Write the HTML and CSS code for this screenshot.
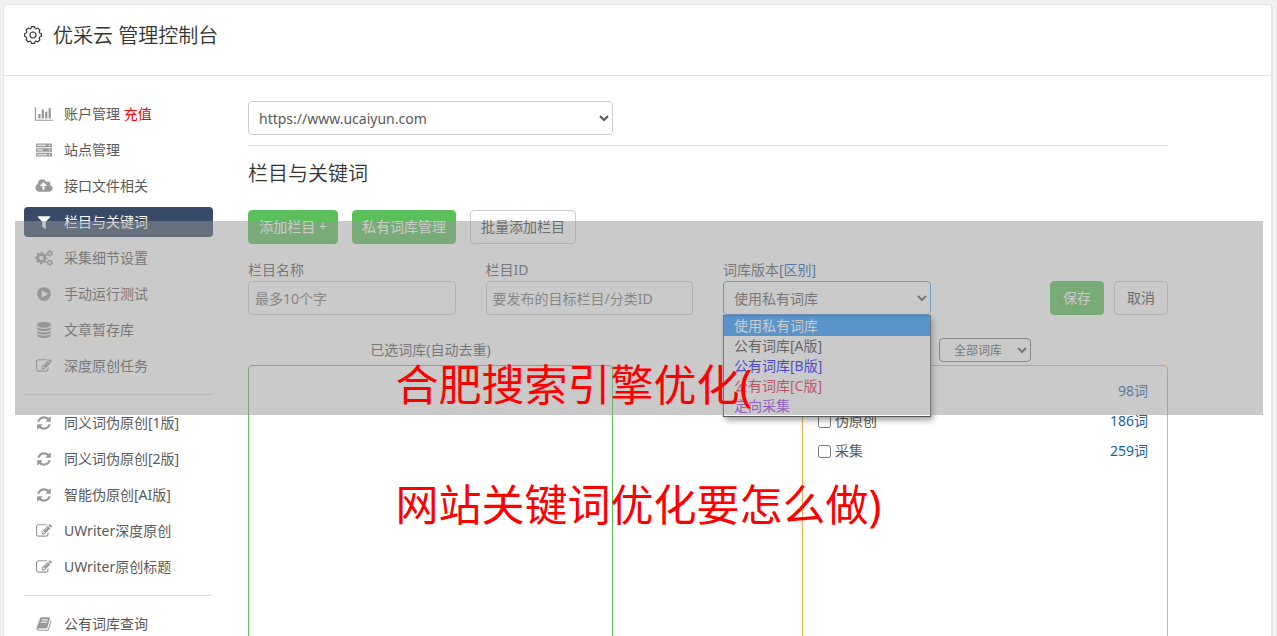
FILE: index.html
```html
<!DOCTYPE html>
<html lang="zh-CN">
<head>
<meta charset="utf-8">
<title>优采云 管理控制台</title>
<link rel="stylesheet" href="styles.css">
</head>
<body>
<svg class="sprite" aria-hidden="true">
  <symbol id="i-chart" viewBox="0 0 2048 1792"><path d="M640 896v512h-256v-512h256zm384-512v1024h-256v-1024h256zm1024 1152v128h-2048v-1536h128v1408h1920zm-640-896v768h-256v-768h256zm384-384v1152h-256v-1152h256z"/></symbol>
  <symbol id="i-server" viewBox="0 0 1792 1792"><path fill-rule="evenodd" d="M0 192q0-32 32-32h1728q32 0 32 32v352q0 32-32 32h-1728q-32 0-32-32zM128 320v96h960v-96zM1440 368a80 80 0 1 0 160 0a80 80 0 1 0-160 0zM0 720q0-32 32-32h1728q32 0 32 32v352q0 32-32 32h-1728q-32 0-32-32zM128 848v96h640v-96zM1440 896a80 80 0 1 0 160 0a80 80 0 1 0-160 0zM0 1248q0-32 32-32h1728q32 0 32 32v352q0 32-32 32h-1728q-32 0-32-32zM128 1376v96h1100v-96zM1440 1424a80 80 0 1 0 160 0a80 80 0 1 0-160 0z"/></symbol>
  <symbol id="i-cloud" viewBox="0 0 1920 1792"><path d="M1280 864q0-14-9-23l-352-352q-9-9-23-9t-23 9l-351 351q-10 12-10 24 0 14 9 23t23 9h224v352q0 13 9.500 22.500t22.500 9.500h192q13 0 22.500-9.500t9.500-22.500v-352h224q13 0 22.500-9.500t9.500-22.500zm640 288q0 159-112.500 271.500t-271.500 112.500h-1088q-185 0-316.500-131.500t-131.500-316.500q0-130 70-240t188-165q-2-30-2-43 0-212 150-362t362-150q156 0 285.500 87t188.500 231q71-62 166-62 106 0 181 75t75 181q0 76-41 138 130 31 213.500 135.500t83.500 238.500z"/></symbol>
  <symbol id="i-filter" viewBox="0 0 1792 1792"><path d="M1595 295q17 41-14 70l-493 493v742q0 42-39 59-13 5-25 5-27 0-45-19l-256-256q-19-19-19-45v-486l-493-493q-31-29-14-70 17-39 59-39h1280q42 0 59 39z"/></symbol>
  <symbol id="i-cogs" viewBox="0 0 18 16"><g fill="none" stroke="currentColor"><circle cx="6.300" cy="8" r="3.500" stroke-width="2.600"/><circle cx="6.300" cy="8" r="5.300" stroke-width="1.800" stroke-dasharray="2.200 1.963" stroke-dashoffset="1.100"/><circle cx="14.700" cy="3.400" r="1.900" stroke-width="1.400"/><circle cx="14.700" cy="3.400" r="2.800" stroke-width="1" stroke-dasharray="1.500 1.432"/><circle cx="14.700" cy="12.600" r="1.900" stroke-width="1.400"/><circle cx="14.700" cy="12.600" r="2.800" stroke-width="1" stroke-dasharray="1.500 1.432"/></g></symbol>
  <symbol id="i-play" viewBox="0 0 1792 1792"><path d="M896 128q209 0 385.500 103t279.500 279.500 103 385.500-103 385.500-279.500 279.500-385.500 103-385.500-103-279.500-279.500-103-385.500 103-385.500 279.500-279.500 385.500-103zm384 823q32-18 32-55t-32-55l-544-320q-31-19-64-1-32 19-32 56v640q0 37 32 56 16 8 32 8 17 0 32-9z"/></symbol>
  <symbol id="i-db" viewBox="0 0 1792 1792"><path d="M896 768q237 0 443-43t325-127v170q0 69-103 128t-280 93.500-385 34.500-385-34.500-280-93.500-103-128v-170q119 84 325 127t443 43zm0 768q237 0 443-43t325-127v170q0 69-103 128t-280 93.500-385 34.500-385-34.500-280-93.500-103-128v-170q119 84 325 127t443 43zm0-384q237 0 443-43t325-127v170q0 69-103 128t-280 93.500-385 34.500-385-34.500-280-93.500-103-128v-170q119 84 325 127t443 43zm0-1152q208 0 385 34.500t280 93.500 103 128v128q0 69-103 128t-280 93.500-385 34.500-385-34.500-280-93.500-103-128v-128q0-69 103-128t280-93.500 385-34.500z"/></symbol>
  <symbol id="i-edit" viewBox="0 0 1792 1792"><path d="M888 1184l116-116-152-152-116 116v56h96v96h56zm440-720q-16-16-33 1l-350 350q-17 17-1 33t33-1l350-350q17-17 1-33zm80 594v190q0 119-84.500 203.500t-203.500 84.500h-832q-119 0-203.500-84.500t-84.500-203.500v-832q0-119 84.500-203.500t203.500-84.500h832q63 0 117 25 15 7 18 23 3 17-9 29l-49 49q-14 14-32 8-23-6-45-6h-832q-66 0-113 47t-47 113v832q0 66 47 113t113 47h832q66 0 113-47t47-113v-126q0-13 9-22l64-64q15-15 35-7t20 29zm-96-738l288 288-672 672h-288v-288zm444 132l-92 92-288-288 92-92q28-28 68-28t68 28l152 152q28 28 28 68t-28 68z"/></symbol>
  <symbol id="i-refresh" viewBox="0 0 1792 1792"><path d="M1639 1056q0 5-1 7-64 268-268 434.500t-478 166.500q-146 0-282.500-55t-243.500-157l-129 129q-19 19-45 19t-45-19-19-45v-448q0-26 19-45t45-19h448q26 0 45 19t19 45-19 45l-137 137q71 66 161 102t187 36q134 0 250-65t186-179q11-17 53-117 8-23 30-23h192q13 0 22.500 9.500t9.500 22.500zm25-800v448q0 26-19 45t-45 19h-448q-26 0-45-19t-19-45 19-45l138-138q-148-137-349-137-134 0-250 65t-186 179q-11 17-53 117-8 23-30 23h-199q-13 0-22.500-9.500t-9.500-22.500v-7q65-268 270-434.500t480-166.500q146 0 284 55.500t245 156.500l130-129q19-19 45-19t45 19 19 45z"/></symbol>
  <symbol id="i-book" viewBox="0 0 1792 1792"><path d="M1703 478q40 57 18 129l-275 906q-19 64-76.500 107.500t-122.500 43.500h-923q-77 0-148.500-53.500t-99.500-131.500q-24-67-2-127 0-4 3-27t4-37q1-8-3-21.500t-3-19.500q2-11 8-21t16.500-23.500 16.500-23.500q23-38 45-91.500t30-91.500q3-10 .5-30t-.5-28q3-11 17-28t17-23q21-36 42-92t25-90q1-9-2.500-32t.5-28q4-13 22-30.500t22-22.500q19-26 42.500-84.500t27.500-96.500q1-8-3-25.500t-2-26.500q2-8 9-18t18-23 17-21q8-12 16.500-30.500t15-35 16-36 19.500-32 26.500-23.500 36-11.500 47.500 5.500l-1 3q38-9 51-9h761q74 0 114 56t18 130l-274 906q-36 119-71.500 153.500t-128.500 34.500h-869q-27 0-38 15-11 16-1 43 24 70 144 70h923q29 0 56-15.500t35-41.500l300-987q7-22 5-57 38 15 59 43zm-1064 2q-4 13 2 22.500t20 9.500h608q13 0 25.500-9.500t16.500-22.500l21-64q4-13-2-22.500t-20-9.500h-608q-13 0-25.500 9.500t-16.500 22.500zm-83 256q-4 13 2 22.500t20 9.500h608q13 0 25.500-9.500t16.500-22.500l21-64q4-13-2-22.500t-20-9.500h-608q-13 0-25.500 9.500t-16.500 22.500z"/></symbol>
</svg>

<div class="card">
  <header class="header">
    <svg class="gear" viewBox="-9 -9 18 18" aria-hidden="true"><path d="M8.300-1.500V1.500Q5 2.100 6.930 4.810L4.810 6.930Q2.100 5 1.500 8.300H-1.500Q-2.100 5-4.810 6.930L-6.930 4.810Q-5 2.100-8.300 1.500V-1.500Q-5-2.100-6.930-4.810L-4.810-6.930Q-2.100-5-1.500-8.300H1.500Q2.100-5 4.810-6.930L6.930-4.810Q5-2.100 8.300-1.500Z"/><circle r="3"/></svg>
    <h1 class="brand">优采云 管理控制台</h1>
  </header>

  <div class="body">
    <nav class="sidebar">
      <a class="item" href="#"><svg><use href="#i-chart"/></svg><span>账户管理 <em class="hot">充值</em></span></a>
      <a class="item" href="#"><svg><use href="#i-server"/></svg><span>站点管理</span></a>
      <a class="item" href="#"><svg><use href="#i-cloud"/></svg><span>接口文件相关</span></a>
      <a class="item active" href="#"><svg><use href="#i-filter"/></svg><span>栏目与关键词</span></a>
      <a class="item" href="#"><svg><use href="#i-cogs"/></svg><span>采集细节设置</span></a>
      <a class="item" href="#"><svg><use href="#i-play"/></svg><span>手动运行测试</span></a>
      <a class="item" href="#"><svg><use href="#i-db"/></svg><span>文章暂存库</span></a>
      <a class="item" href="#"><svg><use href="#i-edit"/></svg><span>深度原创任务</span></a>
      <hr class="split">
      <a class="item" href="#"><svg><use href="#i-refresh"/></svg><span>同义词伪原创[1版]</span></a>
      <a class="item" href="#"><svg><use href="#i-refresh"/></svg><span>同义词伪原创[2版]</span></a>
      <a class="item" href="#"><svg><use href="#i-refresh"/></svg><span>智能伪原创[AI版]</span></a>
      <a class="item" href="#"><svg><use href="#i-edit"/></svg><span>UWriter深度原创</span></a>
      <a class="item" href="#"><svg><use href="#i-edit"/></svg><span>UWriter原创标题</span></a>
      <hr class="split">
      <a class="item" href="#"><svg><use href="#i-book"/></svg><span>公有词库查询</span></a>
    </nav>

    <main class="main">
      <div class="site-row">
        <select class="control site" aria-label="站点"><option>https://www.ucaiyun.com</option></select>
      </div>
      <h2 class="title">栏目与关键词</h2>
      <div class="actions">
        <button class="btn green" type="button">添加栏目 +</button>
        <button class="btn green" type="button">私有词库管理</button>
        <button class="btn" type="button">批量添加栏目</button>
      </div>

      <form class="fields">
        <div class="field">
          <label for="name">栏目名称</label>
          <input class="control" id="name" type="text" placeholder="最多10个字">
        </div>
        <div class="field">
          <label for="cid">栏目ID</label>
          <input class="control" id="cid" type="text" placeholder="要发布的目标栏目/分类ID">
        </div>
        <div class="field">
          <div class="label-row"><label for="ver">词库版本</label><a href="#">[区别]</a></div>
          <select class="control focused" id="ver"><option>使用私有词库</option></select>
          <ul class="menu">
            <li class="selected">使用私有词库</li>
            <li>公有词库[A版]</li>
            <li class="blue">公有词库[B版]</li>
            <li class="crimson">公有词库[C版]</li>
            <li class="purple">定向采集</li>
          </ul>
        </div>
        <div class="submit">
          <button class="btn green" type="button">保存</button>
          <button class="btn" type="button">取消</button>
        </div>
      </form>

      <div class="lists">
        <section class="list">
          <div class="list-head">已选词库(自动去重)</div>
          <div class="box chosen"></div>
        </section>
        <section class="list">
          <div class="list-head"><select class="small" aria-label="词库筛选"><option>全部词库</option></select></div>
          <div class="box source">
            <div class="row"><span></span><a href="#">98词</a></div>
            <div class="row"><label><input type="checkbox">伪原创</label><a href="#">186词</a></div>
            <div class="row"><label><input type="checkbox">采集</label><a href="#">259词</a></div>
          </div>
        </section>
      </div>
    </main>
  </div>
</div>

<div class="veil"></div>
<div class="caption"><p>合肥搜索引擎优化(<br>网站关键词优化要怎么做)</p></div>
</body>
</html>
```
FILE: styles.css
```css
* { box-sizing: border-box; }

body {
  margin: 0;
  height: 100vh;
  overflow: hidden;
  position: relative;
  padding: 4px 4px 0 3px;
  background: #f1f1f1;
  color: #5a5a5a;
  font: 400 14px/20px "Noto Sans", "Noto Sans CJK SC", sans-serif;
}

button, input, select { font: inherit; color: inherit; }
a { color: #1a5fa8; text-decoration: none; }
.sprite { display: none; }

.card {
  display: flex;
  flex-direction: column;
  min-height: 100%;
  background: #fff;
  border: 1px solid #e5e5e5;
  border-right-width: 2px;
  border-bottom: 0;
  border-radius: 4px 4px 0 0;
}

.header {
  display: flex;
  align-items: center;
  gap: 11px;
  height: 71px;
  padding: 0 20px 10px;
  border-bottom: 1px solid #e3e3e3;
}
.gear { width: 18px; height: 18px; fill: none; stroke: #333; stroke-width: 1.2; stroke-linejoin: round; }
.brand, .title { margin: 0; color: #333; font-size: 20px; font-weight: 350; line-height: 28px; }
.brand { padding-top: 2px; }

.body { display: flex; flex: 1; gap: 35px; padding: 23px 20px 0; }

.sidebar { display: flex; flex-direction: column; gap: 6px; width: 189px; flex: none; }
.item {
  display: flex;
  align-items: center;
  gap: 10px;
  height: 30px;
  padding: 0 10px;
  border-radius: 4px;
  color: #5a5a5a;
}
.item svg { width: 20px; height: 16px; fill: #999; color: #999; }
.item.active { background: #384a68; color: #fff; }
.item.active svg { fill: #fff; }
.hot { color: #f00; font-style: normal; }
.split { width: 100%; height: 1px; margin: 7px 0; border: 0; background: #ddd; }

.main { display: flex; flex-direction: column; flex: 1; max-width: 920px; padding-top: 2px; }
.site-row { padding-bottom: 10px; border-bottom: 1px solid #ddd; }

.control {
  display: block;
  width: 100%;
  height: 34px;
  padding: 0 6px;
  background: #fff;
  border: 1px solid #ccc;
  border-radius: 4px;
}
.control::placeholder { color: #777; }
.control.site { width: 365px; }
.control.focused { border-color: #4a9be8; }

.title { margin: 14px 0 22px; }
.actions { display: flex; gap: 14px; }
.btn {
  height: 34px;
  padding: 0 10px;
  background: #fff;
  border: 1px solid #ccc;
  border-radius: 4px;
  color: #444;
}
.btn.green { padding: 0 9px; background: #5bc05b; border-color: #5bc05b; color: #fff; }
.actions .green { min-width: 90px; }

.fields { display: grid; grid-template-columns: repeat(4, 1fr); gap: 30px; padding-top: 16px; }
.field { position: relative; }
.field > label, .label-row { display: block; height: 21px; }
.menu {
  position: absolute;
  z-index: 1;
  top: 55px;
  left: 0;
  width: 100%;
  margin: 0;
  padding: 0;
  list-style: none;
  background: #fff;
  border: 1px solid #555;
  box-shadow: 2px 3px 6px rgba(0, 0, 0, 0.4);
  color: #333;
}
.menu li { padding-left: 10px; }
.menu .selected { background: #1e90ff; color: #fff; }
.menu .blue { color: #00f; }
.menu .crimson { color: #dc143c; }
.menu .purple { color: #8a2be2; }

.submit { display: flex; justify-content: flex-end; align-items: flex-end; gap: 10px; }
.submit .btn { width: 54px; }

.lists { display: flex; flex: 1; justify-content: space-between; padding-top: 20px; }
.list { display: flex; flex-direction: column; width: 365px; }
.list:last-child { width: 366px; }
.list-head { display: flex; justify-content: center; align-items: center; height: 30px; }
.small {
  width: 92px;
  height: 24px;
  padding: 0 0 0 10px;
  background: #fff;
  border: 1px solid #767676;
  border-radius: 4px;
  font-size: 12px;
}
.box { flex: 1; border: 1px solid; border-bottom: 0; border-radius: 5px 5px 0 0; }
.chosen { border-color: #5bc05b; }
.source { padding: 10px 19px 0 15px; border-color: #f0ad4e; }
.row { display: flex; justify-content: space-between; align-items: center; height: 30px; }
.row label { display: flex; align-items: center; gap: 4px; }
.row input { width: 13px; height: 13px; margin: 0; }

.veil {
  position: absolute;
  z-index: 2;
  top: 221px;
  left: 15px;
  right: 14px;
  height: 194px;
  background: rgba(150, 150, 150, 0.5);
}
.caption {
  position: absolute;
  z-index: 3;
  top: 325px;
  left: 0;
  right: 0;
  display: flex;
  justify-content: center;
  color: #f00;
  font-size: 43px;
  font-weight: 400;
  line-height: 120px;
}
.caption p { margin: 0; }
```
